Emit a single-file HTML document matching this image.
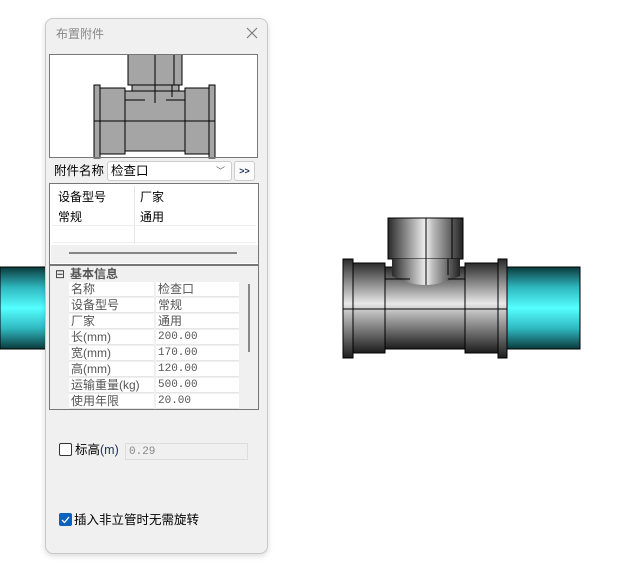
<!DOCTYPE html>
<html><head><meta charset="utf-8"><style>
*{box-sizing:border-box;margin:0;padding:0}
body{width:631px;height:573px;background:#fff;position:relative;overflow:hidden;font-family:"Liberation Sans","Noto Sans CJK SC",sans-serif;font-size:12px;color:#000}
.abs{position:absolute}
.dlg{left:45px;top:18px;width:223px;height:536px;background:#f0f0f0;border:1px solid #c8c8c8;border-radius:8px;box-shadow:0 2px 6px rgba(0,0,0,.15)}
.t{position:absolute;white-space:nowrap;line-height:16px}
.grid .r{position:absolute;left:19px;width:170px;height:15px;background:#fff;border-bottom:1px solid #e6e6e6}
.grid .r span{position:absolute;top:0;line-height:15px;color:#555;font-size:12px}
.mono{font-family:"Liberation Mono",monospace;font-size:11px!important}
</style></head><body>
<svg class="abs" style="left:0;top:0" width="631" height="573">
<defs>
<linearGradient id="cy" x1="0" y1="0" x2="0" y2="1">
<stop offset="0" stop-color="#0a3a3c"/><stop offset=".25" stop-color="#2fb8c0"/><stop offset=".5" stop-color="#55ffff"/><stop offset=".75" stop-color="#2fb8c0"/><stop offset="1" stop-color="#0a3a3c"/></linearGradient>
<linearGradient id="gv" x1="0" y1="0" x2="0" y2="1">
<stop offset="0" stop-color="#2a2a2a"/><stop offset=".45" stop-color="#e8e8e8"/><stop offset=".55" stop-color="#bdbdbd"/><stop offset="1" stop-color="#1c1c1c"/></linearGradient>
<linearGradient id="gh" x1="0" y1="0" x2="1" y2="0">
<stop offset="0" stop-color="#2a2a2a"/><stop offset=".5" stop-color="#f0f0f0"/><stop offset=".6" stop-color="#bbb"/><stop offset="1" stop-color="#222"/></linearGradient>
</defs>
<rect x="0" y="267" width="60" height="82" fill="url(#cy)" stroke="#000"/>
<rect x="505" y="267" width="75" height="82" fill="url(#cy)" stroke="#000"/>
<rect x="388" y="218" width="75" height="41" fill="url(#gh)" stroke="#000"/>
<path d="M392 259 H460 V272 Q440 285 426 285 Q408 285 392 272Z" fill="url(#gh)"/>
<rect x="385" y="267" width="80" height="82" fill="url(#gv)" stroke="#000"/>
<path d="M392 259 H460 V276 Q440 285 426 285 Q408 285 392 276Z" fill="url(#gh)"/>
<rect x="353" y="263" width="32" height="90" fill="url(#gv)" stroke="#000"/>
<rect x="465" y="263" width="33" height="90" fill="url(#gv)" stroke="#000"/>
<rect x="343" y="259" width="10" height="99" fill="url(#gv)" stroke="#000"/>
<rect x="498" y="259" width="9" height="99" fill="url(#gv)" stroke="#000"/>
<path d="M343 309H507M426 218V285M452 218V259M448 259V275M385 279H410M448 279H465" stroke="#000" fill="none"/>
</svg>
<div class="abs dlg">
<div class="t" style="left:10px;top:7px;color:#888;font-size:12px">布置附件</div>
<svg class="abs" style="left:200px;top:8px" width="12" height="12"><path d="M1 1L11 11M11 1L1 11" stroke="#777" stroke-width="1.1"/></svg>
<svg class="abs" style="left:3px;top:35px" width="210" height="105">
<rect x=".5" y=".5" width="208" height="103" fill="#fff" stroke="#777"/>
<g fill="#a5a5a5" stroke="#000" stroke-width="1">
<rect x="79" y="0" width="54" height="31"/>
<rect x="83" y="31" width="47" height="8"/>
<rect x="76" y="37" width="60" height="60"/>
<rect x="51" y="34" width="25" height="66"/>
<rect x="136" y="34" width="24" height="66"/>
<rect x="45" y="31" width="6" height="73"/>
<rect x="160" y="31" width="6" height="73"/>
</g>
<path d="M45 67H166M106 0V49M125 0V31M123 31V43M76 46H96M117 46H136" stroke="#000"/>
<rect x=".5" y=".5" width="208" height="103" fill="none" stroke="#777"/>
</svg>
<div class="t" style="left:8px;top:144px;font-size:12.5px">附件名称</div>
<div class="abs" style="left:61px;top:142px;width:125px;height:20px;background:#fff;border:1px solid #ccc;border-radius:3px"><span class="t" style="left:3px;top:1px;font-size:12.5px">检查口</span><span class="t" style="left:108px;top:1px;color:#666;font-size:9px">﹀</span></div>
<div class="abs" style="left:188px;top:142px;width:21px;height:20px;background:#fbfbfb;border:1px solid #ccc;border-radius:3px;font-size:9px;line-height:18px;text-align:center;color:#235;font-weight:bold">&gt;&gt;</div>
<div class="abs" style="left:3px;top:164px;width:210px;height:82px;background:#fff;border:1px solid #777">
<div class="t" style="left:8px;top:5px">设备型号</div><div class="t" style="left:90px;top:5px">厂家</div>
<div class="t" style="left:8px;top:25px">常规</div><div class="t" style="left:90px;top:25px">通用</div>
<div class="abs" style="left:84px;top:2px;width:1px;height:58px;background:#e6e6e6"></div>
<div class="abs" style="left:2px;top:41px;width:204px;height:1px;background:#eee"></div>
<div class="abs" style="left:2px;top:58px;width:204px;height:1px;background:#eee"></div>
<div class="abs" style="left:1px;top:61px;width:207px;height:18px;background:#f0f0f0"></div>
<div class="abs" style="left:19px;top:68px;width:168px;height:2px;background:#858585"></div>
</div>
<div class="abs grid" style="left:3px;top:246px;width:210px;height:145px;background:#f0f0f0;border:1px solid #777;overflow:hidden">
<div class="abs" style="left:1px;top:1px;width:190px;height:15px;background:#f0f0f0"></div>
<div class="t" style="left:5px;top:0;font-size:12px;color:#333">⊟</div>
<div class="t" style="left:20px;top:0;font-weight:bold;color:#555">基本信息</div>
<div class="r" style="top:16px"><span style="left:2px">名称</span><span style="left:89px">检查口</span></div>
<div class="r" style="top:32px"><span style="left:2px">设备型号</span><span style="left:89px">常规</span></div>
<div class="r" style="top:48px"><span style="left:2px">厂家</span><span style="left:89px">通用</span></div>
<div class="r" style="top:64px"><span style="left:2px">长(mm)</span><span class="mono" style="left:89px">200.00</span></div>
<div class="r" style="top:80px"><span style="left:2px">宽(mm)</span><span class="mono" style="left:89px">170.00</span></div>
<div class="r" style="top:96px"><span style="left:2px">高(mm)</span><span class="mono" style="left:89px">120.00</span></div>
<div class="r" style="top:112px"><span style="left:2px">运输重量(kg)</span><span class="mono" style="left:89px">500.00</span></div>
<div class="r" style="top:128px"><span style="left:2px">使用年限</span><span class="mono" style="left:89px">20.00</span></div>
<div class="abs" style="left:104px;top:16px;width:2px;height:130px;background:#f0f0f0"></div>
<div class="abs" style="left:198px;top:18px;width:2px;height:68px;background:#888"></div>
</div>
<div class="abs" style="left:13px;top:424px;width:13px;height:13px;border:1px solid #333;border-radius:2px;background:#fff"></div>
<div class="t" style="left:29px;top:423px;font-size:12.5px">标高<span style="color:#235">(m)</span></div>
<div class="abs" style="left:79px;top:424px;width:123px;height:17px;border:1px solid #ddd;background:#f0f0f0"><span class="t" style="left:3px;top:0;color:#888;font-size:11px;font-family:'Liberation Mono',monospace">0.29</span></div>
<div class="abs" style="left:13px;top:494px;width:13px;height:13px;border-radius:2px;background:#0a62c0"><svg width="13" height="13" style="position:absolute;left:0;top:0"><path d="M3 7L5.5 9.5L10 4" stroke="#fff" stroke-width="1.3" fill="none"/></svg></div>
<div class="t" style="left:28px;top:493px;font-size:12.5px">插入非立管时无需旋转</div>
</div>
</body></html>
